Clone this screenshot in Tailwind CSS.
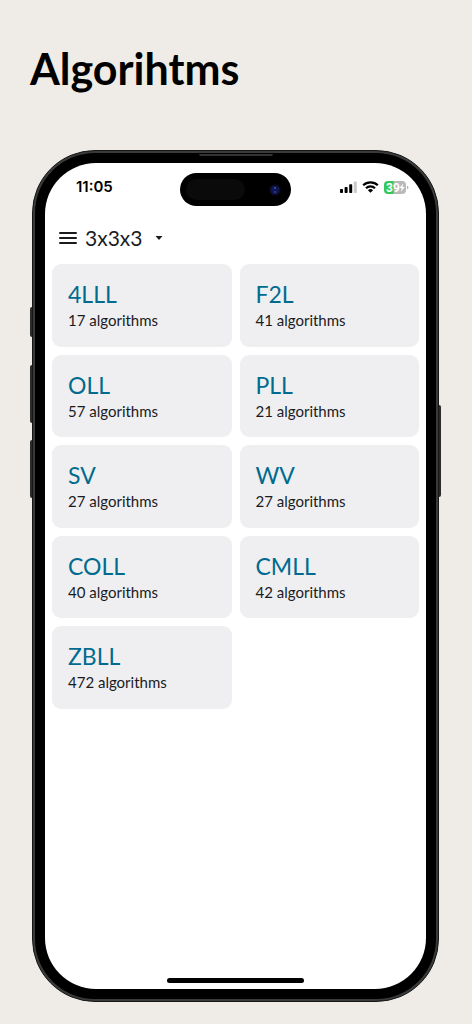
<!DOCTYPE html>
<html lang="en">
  <head>
    <meta charset="UTF-8" />
    <meta name="viewport" content="width=device-width, initial-scale=1.0" />
    <title>Algorihtms</title>
    <script src="https://cdn.jsdelivr.net/npm/@tailwindcss/browser@4"></script>
  </head>
  <body class="flex min-h-screen flex-col bg-[#efece7] pb-[22px] pl-8 pr-[33px] font-[Lato,sans-serif] text-[#1b1b1f]">
    <h1 class="-ml-0.5 h-[150px] pt-11 text-[43px] leading-[50px] font-bold text-black">Algorihtms</h1>

    <!-- phone body -->
    <div class="relative flex grow flex-col rounded-[63px] border border-[#151615] bg-[#393b3a]">
      <!-- side buttons -->
      <div class="absolute top-[156px] -left-[3px] h-[30px] w-0.5 rounded-l-xs bg-[#2a2c2b]"></div>
      <div class="absolute top-[214px] -left-[3px] h-[58px] w-0.5 rounded-l-xs bg-[#2a2c2b]"></div>
      <div class="absolute top-[289px] -left-[3px] h-[58px] w-0.5 rounded-l-xs bg-[#2a2c2b]"></div>
      <div class="absolute top-[254px] -right-[3px] h-[92px] w-0.5 rounded-r-xs bg-[#2a2c2b]"></div>

      <div class="m-0.5 flex grow flex-col rounded-[60px] bg-black p-2.5">
        <!-- speaker -->
        <div class="absolute top-[3px] left-1/2 h-0.5 w-[74px] -translate-x-1/2 rounded-b-xs bg-[#333333]"></div>

        <div class="flex grow flex-col rounded-[51px] bg-white px-[7px]">
          <!-- status bar -->
          <div class="grid grid-cols-[1fr_111px_1fr] pt-2.5">
            <div class="pl-6 font-[Inter,sans-serif] text-[15px] leading-7 font-semibold text-black">11:05</div>
            <div class="flex h-[33px] items-center justify-between rounded-full bg-black pr-2.5 pl-1.5">
              <div class="h-[21px] w-[59px] rounded-full bg-[#0a0a0a]"></div>
              <svg class="size-3" viewBox="0 0 12 12">
                <circle cx="6" cy="6" r="5.5" fill="#0b0d24" />
                <circle cx="6" cy="6" r="4" fill="#10174f" />
                <circle cx="6" cy="4" r="1.1" fill="#3550b8" />
                <circle cx="6" cy="8" r="1.1" fill="#2b3c9c" />
              </svg>
            </div>
            <div class="flex h-7 items-center justify-end gap-[5px] pr-2.5">
              <svg class="h-3 w-[17px]" viewBox="0 0 17 12">
                <rect x="0" y="8" width="3" height="4" rx="0.8" />
                <rect x="4.6" y="6" width="3" height="6" rx="0.8" />
                <rect x="9.2" y="3.2" width="3" height="8.8" rx="0.8" />
                <rect x="13.8" y="0.5" width="3" height="11.5" rx="0.8" fill="#c9c9c9" />
              </svg>
              <svg class="h-3 w-[17px]" viewBox="0 0 17 12" fill="none" stroke="#000" stroke-width="2.2">
                <path d="M1.200 4.300a10.400 10.400 0 0 1 14.600 0" />
                <path d="M4 7.300a6.400 6.400 0 0 1 9 0" />
                <path d="M8.500 11.800 5.900 9.200a3.700 3.700 0 0 1 5.200 0z" fill="#000" stroke="none" />
              </svg>
              <svg class="h-[13px] w-[25px]" viewBox="0 0 25 13">
                <path d="M4 0h6v13H4a4 4 0 0 1-4-4V4a4 4 0 0 1 4-4z" fill="#34c759" />
                <path d="M9.500 0H18a4 4 0 0 1 4 4v5a4 4 0 0 1-4 4H9.500z" fill="#b9b9b9" />
                <path d="M23 4.500c2 .8 2 3.200 0 4z" fill="#b9b9b9" />
                <text x="2" y="10.700" class="font-[Roboto,sans-serif] text-[12px] font-bold" fill="#fff">39</text>
                <path d="M19.200 2.500l-3.700 4.600h2.200l-.9 3.600 4-4.800h-2.300z" fill="#fff" />
              </svg>
            </div>
          </div>

          <!-- toolbar -->
          <div class="flex h-[58px] items-center pt-1.5 pl-[7px]">
            <button type="button" aria-label="Menu">
              <svg class="h-3 w-[18px]" viewBox="0 0 18 12" stroke="#1b1b1f" stroke-width="2" stroke-linecap="round">
                <path d="M1 1h16M1 6h16M1 11h16" />
              </svg>
            </button>
            <div class="relative ml-2 flex items-center">
              <select aria-label="Puzzle" class="w-20 appearance-none bg-transparent text-[21px] leading-7">
                <option>3x3x3</option>
              </select>
              <svg class="pointer-events-none absolute right-0.5 h-1 w-2" viewBox="0 0 8 4">
                <path d="M0.500 0h7L4 4z" fill="#1b1b1f" />
              </svg>
            </div>
          </div>

          <!-- algorithm sets -->
          <main class="grid min-h-[445px] auto-rows-fr grid-cols-2 gap-2">
            <a href="#4lll" class="rounded-[9px] bg-[#efeff1] px-4 pt-4">
              <h2 class="text-[23px] leading-7 text-[#006b8f]">4LLL</h2>
              <p class="text-[15px] leading-6">17 algorithms</p>
            </a>
            <a href="#f2l" class="rounded-[9px] bg-[#efeff1] px-4 pt-4">
              <h2 class="text-[23px] leading-7 text-[#006b8f]">F2L</h2>
              <p class="text-[15px] leading-6">41 algorithms</p>
            </a>
            <a href="#oll" class="rounded-[9px] bg-[#efeff1] px-4 pt-4">
              <h2 class="text-[23px] leading-7 text-[#006b8f]">OLL</h2>
              <p class="text-[15px] leading-6">57 algorithms</p>
            </a>
            <a href="#pll" class="rounded-[9px] bg-[#efeff1] px-4 pt-4">
              <h2 class="text-[23px] leading-7 text-[#006b8f]">PLL</h2>
              <p class="text-[15px] leading-6">21 algorithms</p>
            </a>
            <a href="#sv" class="rounded-[9px] bg-[#efeff1] px-4 pt-4">
              <h2 class="text-[23px] leading-7 text-[#006b8f]">SV</h2>
              <p class="text-[15px] leading-6">27 algorithms</p>
            </a>
            <a href="#wv" class="rounded-[9px] bg-[#efeff1] px-4 pt-4">
              <h2 class="text-[23px] leading-7 text-[#006b8f]">WV</h2>
              <p class="text-[15px] leading-6">27 algorithms</p>
            </a>
            <a href="#coll" class="rounded-[9px] bg-[#efeff1] px-4 pt-4">
              <h2 class="text-[23px] leading-7 text-[#006b8f]">COLL</h2>
              <p class="text-[15px] leading-6">40 algorithms</p>
            </a>
            <a href="#cmll" class="rounded-[9px] bg-[#efeff1] px-4 pt-4">
              <h2 class="text-[23px] leading-7 text-[#006b8f]">CMLL</h2>
              <p class="text-[15px] leading-6">42 algorithms</p>
            </a>
            <a href="#zbll" class="rounded-[9px] bg-[#efeff1] px-4 pt-4">
              <h2 class="text-[23px] leading-7 text-[#006b8f]">ZBLL</h2>
              <p class="text-[15px] leading-6">472 algorithms</p>
            </a>
          </main>

          <!-- home indicator -->
          <div class="mx-auto mt-auto mb-1.5 h-[5px] w-[137px] rounded-full bg-black"></div>
        </div>
      </div>
    </div>
  </body>
</html>
